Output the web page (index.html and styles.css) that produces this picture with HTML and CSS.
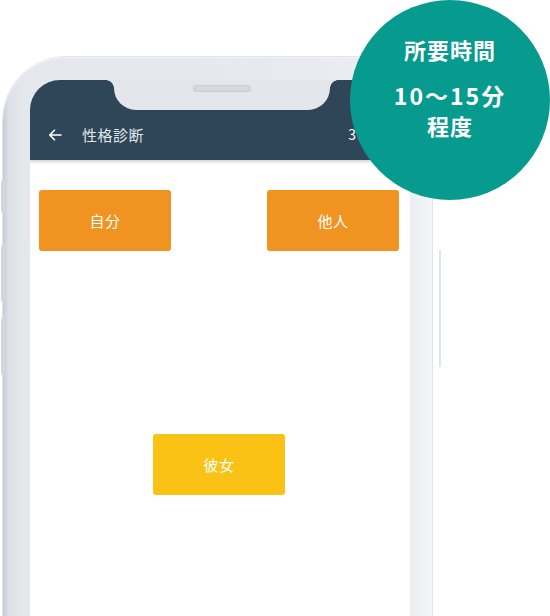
FILE: index.html
```html
<!DOCTYPE html>
<html lang="ja">
<head>
<meta charset="utf-8">
<link rel="stylesheet" href="styles.css">
</head>
<body>
<div class="stage">
  <div class="phone">
    <span class="side-btn b1"></span>
    <span class="side-btn b2"></span>
    <span class="side-btn b3"></span>
    <span class="side-btn-r"></span>
    <div class="screen">
      <div class="notch"><span class="speaker"></span></div>
      <header class="appbar">
        <div class="bar-row">
          <svg class="back" width="14" height="12" viewBox="0 0 14 12"><path d="M13 6H2M6.5 1.2L1.7 6l4.8 4.8" fill="none" stroke="#fff" stroke-width="1.6" stroke-linecap="round" stroke-linejoin="round"/></svg>
          <span class="title">性格診断</span>
          <span class="count">3</span>
        </div>
      </header>
      <div class="content">
        <div class="row top">
          <div class="choice orange">自分</div>
          <div class="choice orange">他人</div>
        </div>
        <div class="row center">
          <div class="choice yellow">彼女</div>
        </div>
      </div>
    </div>
  </div>
  <div class="badge">
    <span class="b-l1">所要時間</span>
    <span class="b-l2">10〜15分</span>
    <span class="b-l3">程度</span>
  </div>
</div>
</body>
</html>
```
FILE: styles.css
```css
html, body {
  margin: 0;
  padding: 0;
  background: #fff;
}
.stage {
  position: relative;
  width: 550px;
  height: 616px;
  overflow: hidden;
  font-family: "Noto Sans CJK JP", "Noto Sans", sans-serif;
  padding-top: 57px;
  box-sizing: border-box;
}
.phone {
  position: relative;
  margin-left: 3px;
  width: 429px;
  height: 700px;
  box-sizing: border-box;
  padding: 23px 22px 0 27px;
  border-radius: 64px 64px 0 0;
  background: linear-gradient(90deg, #c7ccd4 0px, #dde1e7 6px, #e4e7ec 20px, #e6e9ed 60%, #eceef2 95%, #f4f5f7 100%);
  box-shadow: inset 0 1px 0 #f3f4f6, 0 0 0 1px #e0e3e8;
}
.side-btn {
  position: absolute;
  left: -2px;
  width: 4px;
  background: #d2d6dd;
  border-radius: 2px;
}
.b1 { top: 123px; height: 33px; }
.b2 { top: 188px; height: 57px; }
.b3 { top: 261px; height: 57px; }
.side-btn-r {
  position: absolute;
  right: -9px;
  top: 193px;
  width: 2px;
  height: 117px;
  background: #e1e4ea;
  border-radius: 1px;
}
.screen {
  position: relative;
  width: 380px;
  height: 700px;
  background: #fff;
  border-radius: 30px 30px 0 0;
  overflow: hidden;
}
.notch {
  position: absolute;
  left: 84px;
  top: 0;
  width: 216px;
  height: 30px;
  background: #e3e6eb;
  border-radius: 0 0 22px 22px;
  display: flex;
  justify-content: center;
  z-index: 2;
}
.notch::before,
.notch::after {
  content: "";
  position: absolute;
  top: 0;
  width: 8px;
  height: 8px;
}
.notch::before {
  left: -8px;
  background: radial-gradient(circle at 0 100%, transparent 7.5px, #e3e6eb 8px);
}
.notch::after {
  right: -8px;
  background: radial-gradient(circle at 100% 100%, transparent 7.5px, #e3e6eb 8px);
}
.speaker {
  margin-top: 5px;
  width: 58px;
  height: 7px;
  border-radius: 4px;
  background: #d5d9df;
  box-shadow: inset 0 0 0 1px #c9ced6;
}
.appbar {
  height: 80px;
  box-sizing: border-box;
  padding-top: 30px;
  background: #2f4558;
  box-shadow: 0 2px 3px rgba(0,0,0,0.18);
  position: relative;
  z-index: 1;
}
.bar-row {
  height: 48px;
  display: flex;
  align-items: center;
  padding-left: 18px;
}
.back {
  margin-right: 20px;
  margin-top: 1px;
}
.title {
  color: #e1e5e8;
  font-size: 15px;
  letter-spacing: 0.5px;
}
.count {
  margin-left: auto;
  margin-right: 54px;
  color: #fff;
  font-size: 14px;
}
.content {
  padding-top: 30px;
}
.row {
  display: flex;
}
.row.top {
  justify-content: space-between;
  padding: 0 11px 0 9px;
}
.row.center {
  justify-content: center;
  margin-top: 183px;
  padding-right: 2px;
}
.choice {
  width: 132px;
  height: 61px;
  border-radius: 3px;
  display: flex;
  align-items: center;
  justify-content: center;
  color: #fff;
  font-size: 15px;
  letter-spacing: 0.5px;
}
.orange { background: #f19320; }
.yellow { background: #f9c215; }
.badge {
  position: absolute;
  left: 350px;
  top: 0;
  width: 200px;
  height: 200px;
  border-radius: 50%;
  background: #069b8e;
  color: #fff;
  display: flex;
  flex-direction: column;
  align-items: center;
  font-weight: 700;
  z-index: 3;
}
.b-l1 {
  margin-top: 34px;
  font-size: 22px;
  line-height: 30px;
  letter-spacing: 1px;
}
.b-l2 {
  margin-top: 16px;
  font-size: 23px;
  line-height: 30px;
  letter-spacing: 2px;
  white-space: nowrap;
}
.b-l3 {
  margin-top: 0;
  font-size: 22px;
  line-height: 30px;
  letter-spacing: 1px;
}
```
